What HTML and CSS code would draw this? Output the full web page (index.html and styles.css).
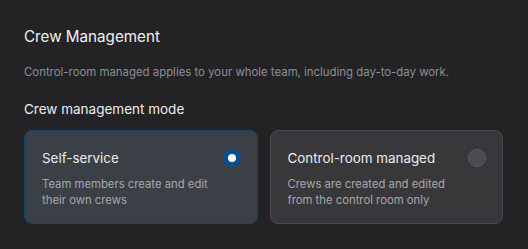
FILE: index.html
```html
<!DOCTYPE html>
<html lang="en">
<head>
  <meta charset="UTF-8" />
  <meta name="viewport" content="width=device-width, initial-scale=1.0"/>
  <title>Crew Management</title>
  <link rel="stylesheet" href="styles.css">
</head>
<body>

  <div class="panel">
    <h2 class="title">Crew Management</h2>
    <p class="desc">Control-room managed applies to your whole team, including day-to-day work.</p>

    <h3 class="subtitle">Crew management mode</h3>

    <div class="options">
      <label class="option selected">
        <div class="option-head">
          <span class="option-title">Self-service</span>
          <span class="radio"></span>
        </div>
        <p class="option-text">Team members create and edit their own crews</p>
      </label>

      <label class="option">
        <div class="option-head">
          <span class="option-title">Control-room managed</span>
          <span class="radio"></span>
        </div>
        <p class="option-text">Crews are created and edited from the control room only</p>
      </label>
    </div>
  </div>

</body>
</html>
```

FILE: styles.css
```css
* {
  box-sizing: border-box;
  margin: 0;
  padding: 0;
}

body {
  background-color: #232325;
  font-family: Inter, "Noto Sans", sans-serif;
  color: #ececee;
}

.panel {
  padding: 27px 25px 24px 24px;
}

.title {
  font-size: 15.2px;
  font-weight: 400;
  line-height: 20px;
  color: #f0f0f2;
}

.desc {
  margin-top: 17px;
  font-size: 11.4px;
  line-height: 16px;
  color: #8e8e93;
}

.subtitle {
  margin-top: 20px;
  font-size: 13.5px;
  font-weight: 400;
  line-height: 18px;
  color: #ececee;
}

.options {
  display: grid;
  grid-template-columns: 1fr 1fr;
  gap: 12px;
  margin-top: 12px;
}

.option {
  display: block;
  height: 94px;
  padding: 17px 16px 0 17px;
  background-color: #38383b;
  border: 1px solid #4a4a4e;
  border-radius: 8px;
  cursor: pointer;
}

.option.selected {
  background-color: #3b3f46;
  border-color: #0e4672;
}

.option-head {
  display: flex;
  justify-content: space-between;
  align-items: center;
  height: 20px;
}

.option-title {
  font-size: 13.4px;
  line-height: 20px;
}

.radio {
  width: 18px;
  height: 18px;
  border-radius: 50%;
  background-color: #4b4b4f;
  border: 1px solid #5a5a5e;
}

.option.selected .radio {
  background-color: #fff;
  border: 5px solid #0b4f8c;
}

.option-text {
  margin-top: 8px;
  width: 180px;
  font-size: 11.3px;
  line-height: 16px;
  color: #a7a7ac;
}
```
